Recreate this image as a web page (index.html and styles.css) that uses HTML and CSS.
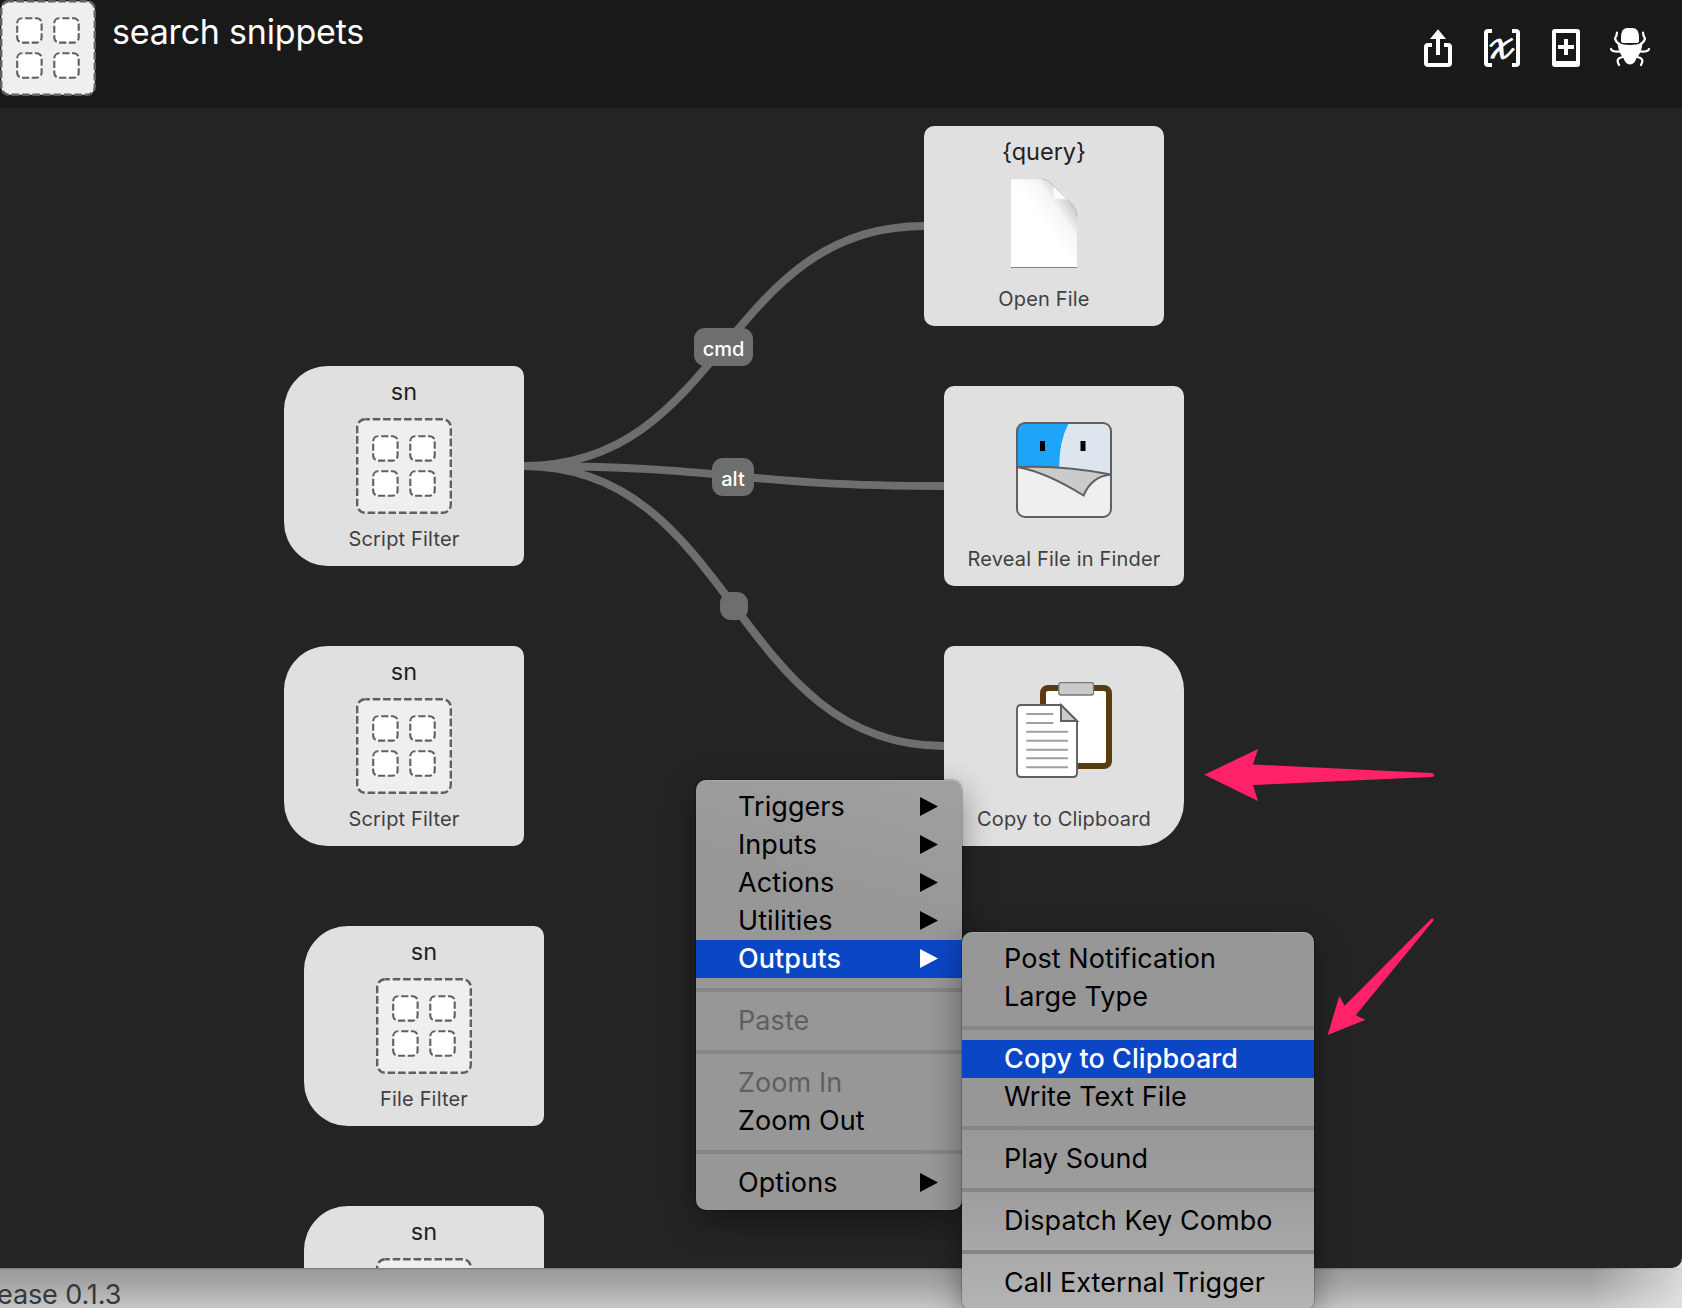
FILE: index.html
```html
<!DOCTYPE html>
<html lang="en">
<head>
<meta charset="utf-8">
<title>search snippets</title>
<link rel="stylesheet" href="styles.css">
</head>
<body>
<svg class="defs" width="0" height="0" aria-hidden="true">
  <defs>
    <symbol id="grid" viewBox="0 0 96 96">
      <rect x="1.2" y="1.2" width="93.6" height="93.6" rx="8" fill="#efefef"/>
      <rect x="1.2" y="1.2" width="93.6" height="93.6" rx="8" fill="none" stroke="#606060" stroke-width="2.4" stroke-dasharray="7.6 2.85" stroke-dashoffset="3"/>
      <g fill="#fff" stroke="#606060" stroke-width="2.1" stroke-dasharray="7.2 2.5" stroke-dashoffset="-3">
        <rect x="17.2" y="18.2" width="24.4" height="24.4" rx="5"/>
        <rect x="54.3" y="18.2" width="24.4" height="24.4" rx="5"/>
        <rect x="17.2" y="53.3" width="24.4" height="24.4" rx="5"/>
        <rect x="54.3" y="53.3" width="24.4" height="24.4" rx="5"/>
      </g>
    </symbol>
  </defs>
</svg>
<div class="window">
  <header class="header">
    <svg class="icon"><use href="#grid"/></svg>
    <h1 class="title">search snippets</h1>
    <nav class="tools">
      <svg class="tool" viewBox="0 0 40 40"><path d="M14 17H10q-2 0-2 2v16q0 2 2 2h20q2 0 2-2V19q0-2-2-2h-4M20 27V8" fill="none" stroke="#fff" stroke-width="4"/><path d="M12 11 20 1.300 28 11z" fill="#fff"/></svg>
      <div class="tool variable"><svg viewBox="0 0 40 40"><path d="M10 3H6q-2 0-2 2v30q0 2 2 2h4M30 3h4q2 0 2 2v30q0 2-2 2h-4" fill="none" stroke="#fff" stroke-width="4"/></svg><i>𝓍</i></div>
      <svg class="tool" viewBox="0 0 40 40"><path fill-rule="evenodd" fill="#fff" d="M9 1h22q3 0 3 3v32q0 3-3 3H9q-3 0-3-3V4q0-3 3-3zm1 4v28h20V5z"/><path d="M12 19h16M20 11v16" stroke="#fff" stroke-width="4"/></svg>
      <svg class="tool" viewBox="0 0 40 40"><path d="M11 10Q11 0 17 0h6q6 0 6 10v3q0 2-3 2H14q-3 0-3-2z" fill="#fff"/><path d="M7.500 15Q20 19 32.500 15q-1 10-6 15-2 6.500-6.500 6.500T13.500 30q-5-5-6-15z" fill="#fff"/><g fill="none" stroke="#fff" stroke-width="2.2" stroke-linecap="round"><path d="M7 4.500q0 3-2 6 1 4 5 6M33 4.500q0 3 2 6-1 4-5 6M1 21q1 3 9 2.500M39 21q-1 3-9 2.500M9 37q-4-7 4-8M31 37q4-7-4-8"/></g></svg>
    </nav>
  </header>
  <main class="canvas">
    <svg class="links" viewBox="0 108 1682 1160">
      <path d="M524 466C724 466 724 226 924 226M524 466C734 466 734 486 944 486M524 466C734 466 734 746 944 746"/>
    </svg>
    <span class="pill cmd">cmd</span>
    <span class="pill alt">alt</span>
    <span class="pill dot"></span>

    <section class="node open"><p class="key">{query}</p>
      <svg class="icon" viewBox="0 0 96 96">
        <defs>
          <linearGradient id="paper" x1="0.3" y1="0.6" x2="0.8" y2="0.15"><stop offset="0.3" stop-color="#fff"/><stop offset="0.7" stop-color="#f6f6f6"/><stop offset="1" stop-color="#cecece"/></linearGradient>
          <filter id="soft" x="-10%" y="-10%" width="120%" height="120%"><feDropShadow dx="0" dy="0.800" stdDeviation="0.7" flood-opacity="0.5"/></filter>
        </defs>
        <path d="M14.700 1.200H46q6 0 10 5l18 18q7 6 7 14V89H14.700z" fill="url(#paper)" filter="url(#soft)"/>
        <path d="M57.500 8V21.500H73z" fill="#fbfbfb"/><path d="M57.500 21.500H73q-8 2-15.500 0z" fill="#ddd"/>
        <path d="M46 1.200q6 0 10 5l18 18q7 6 7 14" fill="none" stroke="#b5b5b5" stroke-width="0.8"/>
      </svg><p class="name">Open File</p></section>

    <section class="node input script-a"><p class="key">sn</p><svg class="icon"><use href="#grid"/></svg><p class="name">Script Filter</p></section>
    <section class="node input script-b"><p class="key">sn</p><svg class="icon"><use href="#grid"/></svg><p class="name">Script Filter</p></section>
    <section class="node input file-a"><p class="key">sn</p><svg class="icon"><use href="#grid"/></svg><p class="name">File Filter</p></section>
    <section class="node input file-b"><p class="key">sn</p><svg class="icon"><use href="#grid"/></svg></section>

    <section class="node plain reveal">
      <svg class="icon" viewBox="0 0 96 96">
        <rect x="1" y="1" width="94" height="94" rx="8" fill="#efefef"/>
        <path d="M1 45V9q0-8 8-8h44Q43 20 43.500 45z" fill="#1ea4f8"/>
        <path d="M53 1H87q8 0 8 8V52Q70 46 43.500 45 43 20 53 1z" fill="#dde6ee"/>
        <path d="M24 19h5v10h-5zM64.500 19h5v10h-5z"/>
        <path d="M1 45Q48 43 95 52.500 76 54 67.500 73.500 30 50 1 45z" fill="#cbcbcb" stroke="#606060" stroke-width="2"/>
        <rect x="1" y="1" width="94" height="94" rx="8" fill="none" stroke="#606060" stroke-width="2"/>
      </svg><p class="name">Reveal File in Finder</p></section>

    <section class="node plain output copy">
      <svg class="icon" viewBox="0 0 96 96">
        <rect x="27" y="6" width="66" height="78" rx="5" fill="#fff" stroke="#5b3b12" stroke-width="6"/>
        <rect x="42.800" y="0.700" width="34.700" height="12.300" rx="2" fill="#cacaca" stroke="#777" stroke-width="1.300"/>
        <path d="M5 23H45L61 39V91q0 4-4 4H5q-4 0-4-4V27q0-4 4-4z" fill="#fff" stroke="#606060" stroke-width="1.900"/>
        <path d="M45 23V39H61z" fill="#cbcbcb" stroke="#606060" stroke-width="1.900"/>
        <path d="M10.300 32h27M10.300 41h27M10.300 49.700H52M10.300 58.700H52M10.300 67.700H52M10.300 76.300H52M10.300 85.300H52" stroke="#a0a0a0" stroke-width="1.900"/>
      </svg><p class="name">Copy to Clipboard</p></section>
  </main>
</div>
<footer class="behind">ease 0.1.3</footer>

<ul class="menu main-menu">
  <li class="item more">Triggers</li>
  <li class="item more">Inputs</li>
  <li class="item more">Actions</li>
  <li class="item more">Utilities</li>
  <li class="item more selected">Outputs</li>
  <li class="rule"></li>
  <li class="item disabled">Paste</li>
  <li class="rule"></li>
  <li class="item disabled">Zoom In</li>
  <li class="item">Zoom Out</li>
  <li class="rule"></li>
  <li class="item more">Options</li>
</ul>
<ul class="menu sub-menu">
  <li class="item">Post Notification</li>
  <li class="item">Large Type</li>
  <li class="rule"></li>
  <li class="item selected">Copy to Clipboard</li>
  <li class="item">Write Text File</li>
  <li class="rule"></li>
  <li class="item">Play Sound</li>
  <li class="rule"></li>
  <li class="item">Dispatch Key Combo</li>
  <li class="rule"></li>
  <li class="item">Call External Trigger</li>
</ul>
<svg class="arrows" viewBox="0 0 1682 1308">
  <path d="M1204.300 774.700 1258 749 1253 764.500 1431 773q3 0 3 2t-3 2L1253 785 1258 801z"/>
  <path d="M1327.700 1035 1339.300 996 1344.700 1005.700 1430.500 919.500q1.500-1.500 2.500-.7t0 2.200L1355.700 1015.300 1365.500 1019.700z"/>
</svg>
</body>
</html>
```

FILE: styles.css
```css
* { box-sizing: border-box; margin: 0; padding: 0; }

body {
  position: relative;
  display: flex;
  flex-direction: column;
  width: 1682px;
  height: 1308px;
  overflow: hidden;
  background: #dedede;
  font-family: Inter, "Liberation Sans", sans-serif;
}

.defs { position: absolute; }

.window {
  height: 1268px;
  overflow: hidden;
  border-radius: 0 0 10px 0;
  background: #242424;
  position: relative;
  z-index: 1;
}

.header {
  display: flex;
  height: 108px;
  background: #191919;
  color: #fff;
}

.icon { display: block; width: 96px; height: 96px; flex: none; }

.title {
  margin: 10px 0 0 16px;
  font-size: 34px;
  font-weight: 430;
  line-height: 44px;
  letter-spacing: -0.2px;
}

.tools { display: flex; gap: 24px; margin: 28px 32px 0 auto; }
.tool { width: 40px; height: 40px; }
.variable { display: grid; place-items: center; }
.variable > * { grid-area: 1 / 1; }
.variable i {
  margin-top: -1px;
  font: normal 35px/40px "DejaVu Math TeX Gyre", "DejaVu Serif", serif;
  -webkit-text-stroke: 0.8px #fff;
}

.canvas { position: relative; height: 1160px; }

.links { position: absolute; inset: 0; width: 1682px; height: 1160px; }
.links path { fill: none; stroke: #6e6e6e; stroke-width: 8; }

.pill {
  position: absolute;
  height: 38px;
  border-radius: 11px;
  background: #6e6e6e;
  color: #fff;
  font-size: 20px;
  font-weight: 500;
  line-height: 42px;
  text-align: center;
}
.cmd { left: 694px; top: 220px; width: 59px; }
.alt { left: 712px; top: 350px; width: 42px; }
.dot { left: 720px; top: 484px; width: 28px; height: 28px; }

.node {
  position: absolute;
  display: flex;
  flex-direction: column;
  align-items: center;
  width: 240px;
  height: 200px;
  padding-top: 10px;
  border-radius: 10px;
  background: #e0e0e0;
}
.input { border-radius: 44px 10px 10px 44px; }
.output { border-radius: 10px 44px 44px 10px; }
.open { left: 924px; top: 18px; }
.script-a { left: 284px; top: 258px; }
.script-b { left: 284px; top: 538px; }
.file-a { left: 304px; top: 818px; }
.file-b { left: 304px; top: 1098px; }
.reveal { left: 944px; top: 278px; }
.copy { left: 944px; top: 538px; }

.key { height: 42px; color: #222; font-size: 23.5px; line-height: 32px; }
.name { margin-top: 10px; color: #404040; font-size: 20px; font-weight: 430; line-height: 30px; letter-spacing: 0.18px; white-space: nowrap; }
.plain { padding-top: 36px; }
.plain .name { margin-top: 26px; }

.behind {
  height: 40px;
  padding-top: 10px;
  background:
    linear-gradient(to right, transparent 1590px, rgba(235, 235, 235, 0.75)),
    linear-gradient(#767676 0, #9c9c9c 2px, #a6a6a6 40%, #c5c5c5);
  color: #34373c;
  font-size: 27px;
  line-height: 34px;
  letter-spacing: -0.1px;
  text-indent: -3px;
}

.menu {
  position: absolute;
  z-index: 2;
  padding: 8px 0;
  border-radius: 10px;
  list-style: none;
  font-size: 27px;
  font-weight: 430;
  letter-spacing: 0.08px;
  box-shadow: 0 0 0 1px rgba(0, 0, 0, 0.18), inset 0 1px rgba(255, 255, 255, 0.15), 0 10px 32px rgba(0, 0, 0, 0.4);
}
.main-menu { left: 696px; top: 780px; width: 266px; background: linear-gradient(15deg, #979797 70%, #a0a0a0); }
.sub-menu { left: 962px; top: 932px; width: 352px; height: 378px; background: linear-gradient(#979797 50%, #9e9e9e 70%, #b4b4b4); }

.item {
  display: flex;
  align-items: center;
  justify-content: space-between;
  height: 38px;
  padding: 0 24px 1px 42px;
  color: #000;
  line-height: 36px;
  white-space: nowrap;
}
.more::after {
  content: "";
  width: 18px;
  height: 19px;
  background: currentColor;
  clip-path: polygon(0 0, 100% 50%, 0 100%);
}
.selected { background: #0b46c5; color: #fff; font-weight: 460; }
.disabled { color: #5f5f5f; }
.rule { height: 24px; padding: 10px 0; background: #858585 content-box; }

.arrows { position: absolute; inset: 0; z-index: 3; width: 1682px; height: 1308px; fill: #ff2268; pointer-events: none; }
```
